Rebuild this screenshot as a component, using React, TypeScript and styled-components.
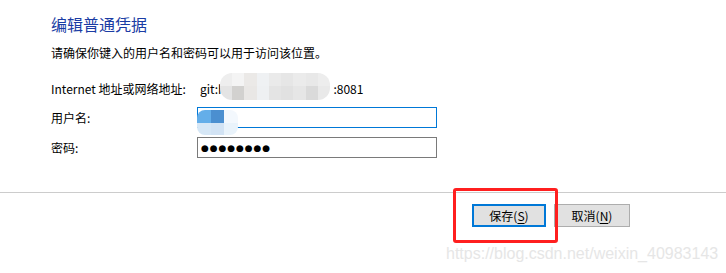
import React from "react";
import styled, { createGlobalStyle } from "styled-components";

const GlobalStyle = createGlobalStyle`
  html, body { margin: 0; padding: 0; background: #ffffff; }
  body {
    font-family: "Noto Sans CJK SC", "Microsoft YaHei", sans-serif;
    color: #000;
  }
`;

const Page = styled.div`
  position: relative;
  width: 726px;
  height: 273px;
  overflow: hidden;
  background: #fff;
`;

const Content = styled.div`
  padding: 13px 0 0 51px;
`;

const Title = styled.div`
  font-size: 16px;
  line-height: 22px;
  height: 22px;
  color: #1a3ca4;
`;

const Instruction = styled.div`
  margin-top: 10px;
  font-size: 12px;
  line-height: 16px;
  height: 16px;
`;

const Form = styled.div`
  margin-top: 18px;
  display: grid;
  grid-template-columns: 146px 240px;
  grid-template-rows: 19px 21px 21px;
  row-gap: 9px;
  align-items: center;
`;

const Label = styled.div`
  font-size: 12px;
  line-height: 16px;
`;

const Value = styled.div`
  position: relative;
  font-size: 12px;
  line-height: 16px;
  padding-left: 3px;
  display: flex;
  align-items: center;
`;

const Field = styled.div<{ $focused?: boolean }>`
  position: relative;
  box-sizing: border-box;
  height: 21px;
  border: 1px solid ${(p) => (p.$focused ? "#0078d7" : "#7a7a7a")};
  background: #fff;
  display: flex;
  align-items: center;
  padding-left: 3px;
`;

const Dots = styled.span`
  font-family: "DejaVu Sans", sans-serif;
  font-size: 9px;
  letter-spacing: 0.9px;
  line-height: 12px;
`;

const Mosaic = styled.div<{ $cols: number; $radius: number }>`
  position: absolute;
  display: grid;
  grid-template-columns: repeat(${(p) => p.$cols}, 1fr);
  grid-auto-rows: 1fr;
  border-radius: ${(p) => p.$radius}px;
  overflow: hidden;
  filter: blur(0.6px);
`;

const AddressMosaic = styled(Mosaic)`
  left: 23px;
  top: -8px;
  width: 110px;
  height: 27px;
`;

const UserMosaic = styled(Mosaic)`
  left: -1px;
  top: 2px;
  width: 41px;
  height: 25px;
`;

const Cell = styled.div``;

const Divider = styled.div`
  margin-top: 34px;
  height: 1px;
  background: #cccccc;
`;

const Footer = styled.div`
  display: flex;
  justify-content: flex-end;
  gap: 8px;
  padding: 11px 96px 0 0;
`;

const Button = styled.button<{ $default?: boolean; $w: number }>`
  box-sizing: border-box;
  width: ${(p) => p.$w}px;
  height: 23px;
  margin: 0;
  padding: 0;
  background: #e1e1e1;
  border: ${(p) => (p.$default ? "2px solid #0078d7" : "1px solid #adadad")};
  font-family: "Noto Sans CJK SC", "Microsoft YaHei", sans-serif;
  font-size: 12px;
  line-height: 16px;
  color: #000;
`;

const Key = styled.span`
  text-decoration: underline;
  text-underline-offset: 2px;
`;

const Highlight = styled.div`
  position: absolute;
  left: 453px;
  top: 188px;
  width: 105px;
  height: 55px;
  box-sizing: border-box;
  border: 3px solid #ff1f1f;
  border-radius: 3px;
  pointer-events: none;
`;

const Watermark = styled.div`
  position: absolute;
  left: 446px;
  top: 245px;
  font-family: "Liberation Sans", Arial, sans-serif;
  font-size: 16px;
  line-height: 18px;
  color: #e6e6e6;
  white-space: nowrap;
  pointer-events: none;
`;

const addressCells = [
  "#eeeeee", "#f4f4f4", "#ebe9e7", "#eff1f3", "#eaeaea", "#e6e6e6", "#ebebeb", "#e8e8e8", "#ededed",
  "#e4e4e4", "#d2d1cf", "#e9e7e5", "#eef0f2", "#e4e4e4", "#e1e1e1", "#e6e6e6", "#dadada", "#e9e9e9",
];

const userCells = ["#64aee9", "#4b8fd0", "#f3f8fd", "#d6e7f6", "#d2e3f4", "#e9f3fb"];

export default function App() {
  return (
    <Page>
      <GlobalStyle />
      <Content>
        <Title>编辑普通凭据</Title>
        <Instruction>请确保你键入的用户名和密码可以用于访问该位置。</Instruction>
        <Form>
          <Label>Internet 地址或网络地址:</Label>
          <Value>
            git:h
            <span style={{ display: "inline-block", width: 108 }} />
            :8081
            <AddressMosaic $cols={9} $radius={12}>
              {addressCells.map((c, i) => (
                <Cell key={i} style={{ background: c }} />
              ))}
            </AddressMosaic>
          </Value>
          <Label>用户名:</Label>
          <Field $focused>
            <UserMosaic $cols={3} $radius={8}>
              {userCells.map((c, i) => (
                <Cell key={i} style={{ background: c }} />
              ))}
            </UserMosaic>
          </Field>
          <Label>密码:</Label>
          <Field>
            <Dots>●●●●●●●●</Dots>
          </Field>
        </Form>
      </Content>
      <Divider />
      <Footer>
        <Button $default $w={74}>
          保存(<Key>S</Key>)
        </Button>
        <Button $w={76}>
          取消(<Key>N</Key>)
        </Button>
      </Footer>
      <Highlight />
      <Watermark>https://blog.csdn.net/weixin_40983143</Watermark>
    </Page>
  );
}
